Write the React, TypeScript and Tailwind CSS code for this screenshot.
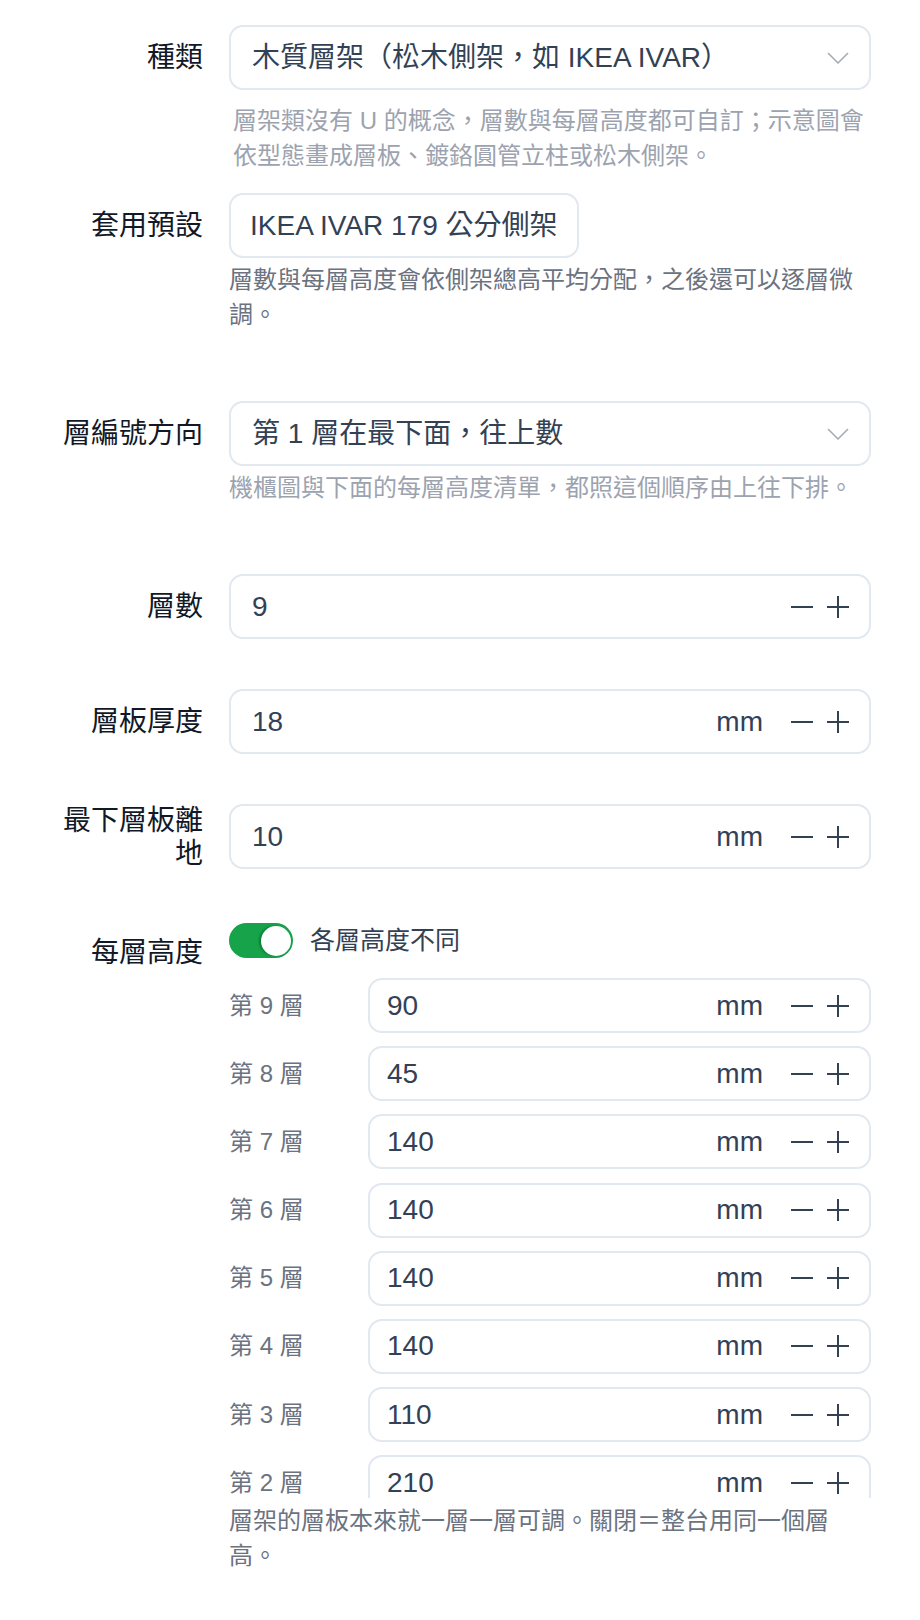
import React from "react";

const Minus = () => (
  <svg width="24" height="24" viewBox="0 0 24 24" className="block">
    <line x1="1" y1="12" x2="23" y2="12" stroke="#334155" strokeWidth="2" />
  </svg>
);

const Plus = () => (
  <svg width="24" height="24" viewBox="0 0 24 24" className="block">
    <line x1="1" y1="12" x2="23" y2="12" stroke="#334155" strokeWidth="2" />
    <line x1="12" y1="1" x2="12" y2="23" stroke="#334155" strokeWidth="2" />
  </svg>
);

const Chevron = () => (
  <svg width="22" height="12" viewBox="0 0 22 12" className="block">
    <polyline points="1,1 11,11 21,1" fill="none" stroke="#a3aab5" strokeWidth="1.5" />
  </svg>
);

function NumField({ value, unit, compact }: { value: string; unit?: string; compact?: boolean }) {
  return (
    <div
      className={
        compact
          ? "flex items-center h-[55px] pl-[17px] pr-[19px] border-2 border-[#e2e8f0] rounded-[14px] bg-white"
          : "flex items-center h-[65px] pl-[21px] pr-[19px] border-2 border-[#e2e8f0] rounded-[14px] bg-white"
      }
    >
      <span className="flex-1 text-[28px] leading-none text-[#334155]">{value}</span>
      {unit && <span className="mr-[27px] text-[28px] leading-none text-[#334155]">{unit}</span>}
      <div className="flex items-center gap-[12px]">
        <Minus />
        <Plus />
      </div>
    </div>
  );
}

function SelectBox({ text }: { text: string }) {
  return (
    <div className="flex items-center justify-between h-[65px] pl-[21px] pr-[20px] border-2 border-[#e2e8f0] rounded-[14px] bg-white">
      <span className="text-[28px] leading-none text-[#334155] whitespace-nowrap">{text}</span>
      <Chevron />
    </div>
  );
}

function Row({
  label,
  children,
  className,
  labelClass,
}: {
  label: string;
  children: React.ReactNode;
  className: string;
  labelClass?: string;
}) {
  return (
    <div className={"flex gap-[26px] " + className}>
      <div
        className={
          "w-[141px] shrink-0 self-start flex items-center justify-end text-right text-[28px] leading-[33px] text-[#111827] " +
          (labelClass ?? "min-h-[65px]")
        }
      >
        {label}
      </div>
      <div className="flex-1 min-w-0">{children}</div>
    </div>
  );
}

const layers: [number, string][] = [
  [9, "90"],
  [8, "45"],
  [7, "140"],
  [6, "140"],
  [5, "140"],
  [4, "140"],
  [3, "110"],
  [2, "210"],
];

export default function App() {
  return (
    <div className="w-[920px] min-h-[1620px] bg-white pl-[62px] pr-[49px] pt-[25px] font-['Liberation_Sans','Noto_Sans_CJK_TC',sans-serif]">
      <Row label="種類" className="">
        <SelectBox text="木質層架（松木側架，如 IKEA IVAR）" />
        <p className="mt-[13px] pl-[4px] text-[24px] leading-[35px] text-[#9ca3af]">
          層架類沒有 U 的概念，層數與每層高度都可自訂；示意圖會依型態畫成層板、鍍鉻圓管立柱或松木側架。
        </p>
      </Row>

      <Row label="套用預設" className="mt-[20px]">
        <div className="inline-flex items-center h-[65px] px-[19px] border-2 border-[#e2e8f0] rounded-[14px] bg-white text-[28px] leading-none text-[#334155] whitespace-nowrap">
          IKEA IVAR 179 公分側架
        </div>
        <p className="mt-[4px] text-[24px] leading-[35px] text-[#6b7280]">
          層數與每層高度會依側架總高平均分配，之後還可以逐層微調。
        </p>
      </Row>

      <Row label="層編號方向" className="mt-[69px]">
        <SelectBox text="第 1 層在最下面，往上數" />
        <p className="mt-[4px] text-[24px] leading-[35px] text-[#9ca3af]">
          機櫃圖與下面的每層高度清單，都照這個順序由上往下排。
        </p>
      </Row>

      <Row label="層數" className="mt-[69px]">
        <NumField value="9" />
      </Row>

      <Row label="層板厚度" className="mt-[50px]">
        <NumField value="18" unit="mm" />
      </Row>

      <Row label="最下層板離地" className="mt-[50px]">
        <NumField value="10" unit="mm" />
      </Row>

      <Row label="每層高度" className="mt-[53px]" labelClass="min-h-[59px]">
        <div className="flex items-center gap-[17px] h-[35px]">
          <div className="w-[64px] h-[35px] rounded-full bg-[#16a34a] flex items-center justify-end px-[2px]">
            <div className="w-[30px] h-[30px] rounded-full bg-white shadow-[-2px_0_2px_rgba(0,70,30,0.4)]" />
          </div>
          <span className="text-[25px] leading-none text-[#334155]">各層高度不同</span>
        </div>
        <div className="mt-[20px] h-[520px] overflow-hidden flex flex-col gap-[13.2px]">
          {layers.map(([n, v]) => (
            <div key={n} className="flex items-center shrink-0">
              <div className="w-[139px] shrink-0 text-[24px] leading-none text-[#6b7280]">第 {n} 層</div>
              <div className="flex-1 min-w-0">
                <NumField value={v} unit="mm" compact />
              </div>
            </div>
          ))}
        </div>
        <p className="mt-[5px] pr-[30px] text-[24px] leading-[35px] text-[#6b7280]">
          層架的層板本來就一層一層可調。關閉＝整台用同一個層高。
        </p>
      </Row>
    </div>
  );
}
